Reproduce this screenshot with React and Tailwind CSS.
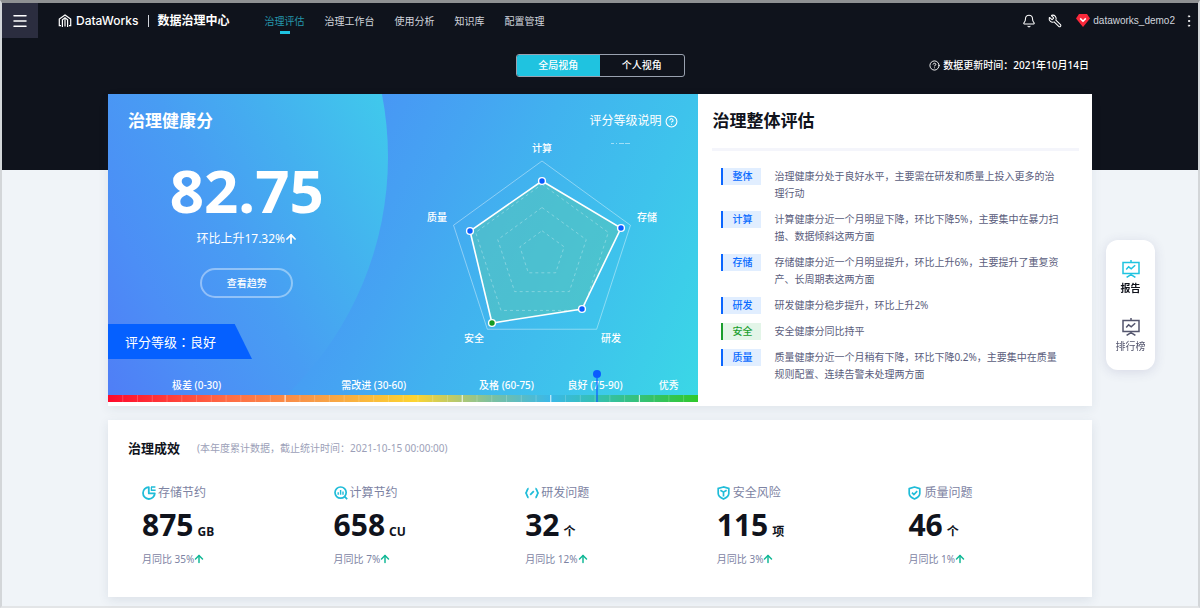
import React, { useState } from "react";
import { Bell, Menu, Wrench, CircleQuestionMark, ArrowUp, MoreVertical } from "lucide-react";

const NAV = ["治理评估", "治理工作台", "使用分析", "知识库", "配置管理"];
const VIEWS = ["全局视角", "个人视角"];

const LEVELS = ["极差 (0-30)", "需改进 (30-60)", "及格 (60-75)", "良好 (75-90)", "优秀"];

const REVIEWS = [
  { tag: "整体", text: "治理健康分处于良好水平，主要需在研发和质量上投入更多的治理行动" },
  { tag: "计算", text: "计算健康分近一个月明显下降，环比下降5%，主要集中在暴力扫描、数据倾斜这两方面" },
  { tag: "存储", text: "存储健康分近一个月明显提升，环比上升6%，主要提升了重复资产、长周期表这两方面" },
  { tag: "研发", text: "研发健康分稳步提升，环比上升2%" },
  { tag: "安全", text: "安全健康分同比持平", good: true },
  { tag: "质量", text: "质量健康分近一个月稍有下降，环比下降0.2%，主要集中在质量规则配置、连续告警未处理两方面" },
];

const STATS = [
  { label: "存储节约", value: "875", unit: "GB", change: "35%", icon: PieIcon },
  { label: "计算节约", value: "658", unit: "CU", change: "7%", icon: SearchChartIcon },
  { label: "研发问题", value: "32", unit: "个", change: "12%", icon: CodeIcon },
  { label: "安全风险", value: "115", unit: "项", change: "3%", icon: ShieldCubeIcon },
  { label: "质量问题", value: "46", unit: "个", change: "1%", icon: ShieldCheckIcon },
];

// Radar geometry
const CENTER = { x: 120, y: 123 };
const RADIUS = 93;
const SCORES = [
  { x: 120, y: 50 },
  { x: 199, y: 97 },
  { x: 160, y: 178 },
  { x: 70, y: 192, good: true },
  { x: 48, y: 100 },
];
const AXES = [
  { name: "计算", x: 120, y: 21 },
  { name: "存储", x: 225, y: 90 },
  { name: "研发", x: 189, y: 211 },
  { name: "安全", x: 52, y: 211 },
  { name: "质量", x: 15, y: 90 },
];

function pentagon(scale) {
  return [0, 1, 2, 3, 4]
    .map((i) => {
      const a = (i * 72 - 90) * (Math.PI / 180);
      return `${CENTER.x + RADIUS * scale * Math.cos(a)},${CENTER.y + RADIUS * scale * Math.sin(a)}`;
    })
    .join(" ");
}

function Logo() {
  return (
    <svg viewBox="0 0 14 14" className="w-[14px] h-[14px]" fill="none" stroke="white" strokeWidth="1.2">
      <path d="M3 11.6H1.3V5L7 1l5.7 4v6.6H11" />
      <path d="M4.4 13V5.8L7 3.8l2.6 2V13" />
      <path d="M7 4v8.4" />
    </svg>
  );
}

function PieIcon() {
  return (
    <svg viewBox="0 0 14 14" className="w-[14px] h-[14px]" fill="none" stroke="#1fbcd8" strokeWidth="1.8">
      <path d="M6.8 1.2A5.9 5.9 0 1 0 12.8 7.4H6.8Z" strokeLinejoin="round" />
      <path d="M9 1.1h4.4M9 4.3h4.6" strokeWidth="1.5" />
      <path d="M9.4 1v4" strokeWidth="1.3" />
    </svg>
  );
}

function SearchChartIcon() {
  return (
    <svg viewBox="0 0 14 14" className="w-[14px] h-[14px]" fill="none" stroke="#1fbcd8" strokeWidth="1.7">
      <circle cx="6.6" cy="6.6" r="5.6" />
      <path d="M10.6 10.6l2.6 2.6" />
      <path d="M4.2 6.2v2.6M6.6 4v4.8M9 5.4v3.4" strokeWidth="1.4" />
    </svg>
  );
}

function CodeIcon() {
  return (
    <svg viewBox="0 0 14 14" className="w-[14px] h-[14px]" fill="none" stroke="#1fbcd8" strokeWidth="1.8">
      <path d="M3.6 2.4C1.9 2.8 2.2 5.6.9 7c1.3 1.4 1 4.2 2.7 4.6" />
      <path d="M10.4 2.4c1.7.4 1.4 3.2 2.7 4.6-1.3 1.4-1 4.2-2.7 4.6" />
      <path d="M5.2 8.8l3.6-3.6" />
    </svg>
  );
}

function ShieldCubeIcon() {
  return (
    <svg viewBox="0 0 14 14" className="w-[14px] h-[14px]" fill="none" stroke="#1fbcd8" strokeWidth="1.7">
      <path d="M6.5 1L1.2 2.4v5.2c0 2.4 2.4 4.2 5.3 5.4 2.9-1.2 5.3-3 5.3-5.4V2.4Z" />
      <path d="M3.4 4.2l3.1 1.9 3.1-1.9M6.5 6v4.6" />
    </svg>
  );
}

function ShieldCheckIcon() {
  return (
    <svg viewBox="0 0 14 14" className="w-[14px] h-[14px]" fill="none" stroke="#1fbcd8" strokeWidth="1.7">
      <path d="M6.5 1L1.2 2.6v5c0 2.4 2.4 4.2 5.3 5.4 2.9-1.2 5.3-3 5.3-5.4v-5Z" strokeLinejoin="round" />
      <path d="M4 6.6l1.9 1.9L9.2 5.2" />
    </svg>
  );
}

function BoardIcon() {
  return (
    <svg viewBox="0 0 18 18" className="w-[18px] h-[18px]" fill="none" stroke="currentColor" strokeWidth="1.5">
      <path d="M9 0v2.4" />
      <path d="M1 2.6h16v10.8H1Z" />
      <path d="M4.2 9.4l2.4-2.6 2.6 2 4-3.6" />
      <path d="M9 13.4v2M4.6 17.4L9 14.6l4.4 2.8" />
    </svg>
  );
}

function Header() {
  return (
    <header className="flex h-[35px] items-center text-white">
      <button aria-label="菜单" className="flex h-[35px] w-9 items-center justify-center bg-[#2b2d3f]">
        <Menu size={18} strokeWidth={2} />
      </button>
      <div className="ml-5 flex items-center">
        <Logo />
        <span className="ml-1 font-['Inter'] text-[12px] font-medium">DataWorks</span>
        <span className="mx-[9px] h-3 w-px bg-gray-300"></span>
        <span className="text-[12px] font-bold">数据治理中心</span>
      </div>
      <nav className="ml-[35px] flex gap-5 text-[10px]">
        {NAV.map((item, i) => (
          <a key={item} href="#" className={`relative leading-4 ${i === 0 ? "text-[#2596ab]" : "text-gray-300"}`}>
            {item}
            {i === 0 && <span className="absolute left-1/2 top-[18px] h-[3px] w-[10px] -translate-x-1/2 bg-[#1fc3e0]"></span>}
          </a>
        ))}
      </nav>
      <div className="ml-auto flex items-center">
        <button aria-label="通知"><Bell size={14} strokeWidth={1.8} /></button>
        <button aria-label="工具" className="ml-3"><Wrench size={14} strokeWidth={1.8} className="-scale-x-100" /></button>
        <svg viewBox="0 0 14 13" className="ml-[14px] h-[13px] w-[14px]">
          <path d="M3 0h8l3 4.4L7 13 0 4.4Z" fill="#f9283a" />
          <path d="M4.2 4.4L7 7.2l2.8-2.8" fill="none" stroke="white" strokeWidth="1.6" />
        </svg>
        <span className="ml-[3px] font-['Liberation_Sans'] text-[10px] text-gray-300">dataworks_demo2</span>
        <button aria-label="更多" className="ml-1.5 mr-px"><MoreVertical size={16} strokeWidth={1.5} /></button>
      </div>
    </header>
  );
}

function Radar() {
  return (
    <svg viewBox="0 0 240 220" className="mx-auto h-[220px] w-[240px]">
      <path d="M189 12.5h3M194 12.5h1M197 12.5h5M203 12.5h5" stroke="white" strokeOpacity="0.5" />
      <polygon points={pentagon(1)} fill="none" stroke="white" strokeOpacity="0.4" />
      <polygon points={SCORES.map((p) => `${p.x},${p.y}`).join(" ")} fill="#55c4bc" fillOpacity="0.6" stroke="white" strokeWidth="1.6" />
      {[0.75, 0.5, 0.25].map((s) => (
        <polygon key={s} points={pentagon(s)} fill="none" stroke="white" strokeOpacity="0.3" strokeDasharray="3 3" />
      ))}
      {SCORES.map((p) => (
        <circle key={p.x} cx={p.x} cy={p.y} r="3.4" fill={p.good ? "#149a22" : "#0b5cff"} stroke="white" strokeWidth="1.4" />
      ))}
      {AXES.map((a) => (
        <text key={a.name} x={a.x} y={a.y} textAnchor="middle" fill="white" fontSize="10" fontWeight="500">
          {a.name}
        </text>
      ))}
    </svg>
  );
}

function ScorePanel() {
  return (
    <section className="relative overflow-hidden bg-[linear-gradient(115deg,#4896f5_36%,#45a4f2_50%,#41b2ef_62%,#3ec3ec_80%,#3ad8e6_100%)] text-white">
      <div className="absolute -left-[380px] -top-[267px] size-[660px] rounded-full bg-[linear-gradient(62deg,#4f7ff6_43%,#4c8ef6_52%,#489df3_63%,#44b0ef_73%,#40c8ec_85%)]"></div>
      <div className="relative">
        <div className="flex items-center justify-between px-5 pt-[17px] leading-5">
          <h2 className="text-[17px] font-bold">治理健康分</h2>
          <a href="#" className="flex items-center gap-1 text-[12px]">
            评分等级说明 <CircleQuestionMark size={13} />
          </a>
        </div>

        <div className="flex">
          <div className="w-[47%]">
            <div className="flex flex-col items-center pt-[29px]">
              <div className="text-[60px] font-bold leading-[60px]">82.75</div>
              <div className="mt-[11px] flex items-center text-[12px] leading-4">
                环比上升17.32%<ArrowUp size={14} strokeWidth={3} className="-mx-px" />
              </div>
              <button className="mt-[21px] h-[30px] w-[93px] rounded-full border-2 border-white/40 text-[10px] font-medium">
                查看趋势
              </button>
            </div>
            <div className="mt-[26px] h-[35px] w-36 bg-[#0560ff] pl-[17px] text-[13px] leading-[35px] [clip-path:polygon(0_0,88%_0,100%_100%,0_100%)]">
              评分等级<span className="font-['Noto_Sans_CJK_JP']" lang="ja">：</span>良好
            </div>
          </div>
          <div className="flex-1">
            <Radar />
          </div>
        </div>

        {/* Level scale */}
        <div className="relative mt-[18px]">
          <div className="grid grid-cols-[30fr_30fr_15fr_15fr_10fr] pb-0.5 text-center text-[10px] font-medium leading-4">
            {LEVELS.map((l) => <span key={l}>{l}</span>)}
          </div>
          <div className="relative h-[7px] bg-[linear-gradient(90deg,#ff0a2c,#ff6b45_20%,#f79b48_35%,#fcd431_52%,#7cc0a0_65%,#3ab8e8_75%,#35c0b0_83%,#35c26a_92%,#30c92c)]">
            <svg viewBox="0 0 40 7" preserveAspectRatio="none" className="h-full w-full" stroke="white">
              {Array.from({ length: 39 }, (_, i) => i + 1).map((i) => (
                <path
                  key={i}
                  d={`M${i} 0v7`}
                  vectorEffect="non-scaling-stroke"
                  strokeOpacity={[12, 24, 30, 36].includes(i) ? 0.9 : 0.2}
                />
              ))}
            </svg>
          </div>
          <div className="absolute bottom-0 left-[82.75%] flex -translate-x-1/2 flex-col items-center">
            <span className="size-2 rounded-full bg-[#0b5cff]"></span>
            <span className="h-6 w-0.5 bg-[#0b5cff]/60"></span>
          </div>
        </div>
      </div>
    </section>
  );
}

function ReviewPanel() {
  return (
    <section className="pl-[14px] pr-[13px] pt-[17px]">
      <h2 className="text-[17px] font-bold leading-5 text-[#10131c]">治理整体评估</h2>
      <div className="mt-[17px] h-[3px] bg-[#f4f5fb]"></div>
      <ul className="mt-[17px] flex flex-col gap-[9px] pl-[9px] pr-[18px] text-[10px] leading-[17px]">
        {REVIEWS.map((r) => (
          <li key={r.tag} className="flex items-start gap-[13px]">
            <span className={`w-10 shrink-0 border-l-2 text-center font-medium ${r.good ? "border-[#1b9e2e] bg-[#e3f5e8] text-[#1b9e2e]" : "border-[#0b66ff] bg-[#e1eeff] text-[#0b6cff]"}`}>
              {r.tag}
            </span>
            <p className="text-[#5a5d7c]">{r.text}</p>
          </li>
        ))}
      </ul>
    </section>
  );
}

function Results() {
  return (
    <section className="mt-[14px] bg-white pb-[30px] pt-[18px] shadow-[0_3px_10px_rgba(40,60,90,0.1)]">
      <div className="flex items-center gap-[17px] px-5 leading-5">
        <h2 className="text-[13px] font-bold text-[#10131c]">治理成效</h2>
        <span className="text-[10px] text-[#9c9fb8]">(本年度累计数据，截止统计时间：2021-10-15 00:00:00)</span>
      </div>
      <div className="mt-[27px] grid grid-cols-5 gap-7 pl-[34px] pr-5">
        {STATS.map((s) => (
          <div key={s.label}>
            <div className="flex items-center gap-0.5 text-[12px] leading-4 text-[#7d83a3]">
              <s.icon />
              {s.label}
            </div>
            <div className="mt-1.5 flex items-baseline gap-1 font-bold text-[#10131c]">
              <span className="text-[30px] leading-9">{s.value}</span>
              <span className="text-[12px]">{s.unit}</span>
            </div>
            <div className="mt-2 flex items-center text-[10px] leading-4 text-[#7d83a3]">
              月同比 {s.change}
              <ArrowUp size={12} strokeWidth={3} className="-ml-px text-[#12b896]" />
            </div>
          </div>
        ))}
      </div>
    </section>
  );
}

export default function App() {
  const [view, setView] = useState(0);

  return (
    <div className="border-2 border-t-[3px] border-[#d3d6d9] border-b-[#e3e5e7] border-t-[#8f9193] bg-[linear-gradient(#0f131c_167px,#f0f4f8_167px)] font-['Noto_Sans','Noto_Sans_CJK_SC',sans-serif]">
      <Header />

      <main className="px-[106px] pb-[9px]">
        <div className="grid h-14 grid-cols-3 items-center pb-0.5 text-[10px] font-medium text-white">
          <div className="col-start-2 mx-auto flex h-[23px] w-[169px] overflow-hidden rounded-[3px] border border-gray-400">
            {VIEWS.map((v, i) => (
              <button key={v} onClick={() => setView(i)} className={`flex-1 ${view === i ? "bg-[#1fc3e0]" : ""}`}>
                {v}
              </button>
            ))}
          </div>
          <div className="mr-[3px] flex items-center justify-end gap-[3px]">
            <CircleQuestionMark size={11} />
            数据更新时间：2021年10月14日
          </div>
        </div>

        <div className="grid grid-cols-[3fr_2fr] bg-white pb-1 shadow-[0_3px_10px_rgba(40,60,90,0.08)]">
          <ScorePanel />
          <ReviewPanel />
        </div>

        <Results />
      </main>

      {/* Floating shortcuts */}
      <aside className="fixed right-[45px] top-60 flex w-[49px] flex-col items-center gap-[22px] rounded-xl bg-white pb-4 pt-5 text-[10px] shadow-[0_2px_12px_rgba(60,60,120,0.14)]">
        <button className="flex flex-col items-center gap-0.5 font-bold leading-4 text-[#10131c]">
          <span className="text-[#1fc3e0]"><BoardIcon /></span>
          报告
        </button>
        <button className="flex flex-col items-center gap-0.5 leading-4 text-[#54566e]">
          <BoardIcon />
          排行榜
        </button>
      </aside>
    </div>
  );
}
